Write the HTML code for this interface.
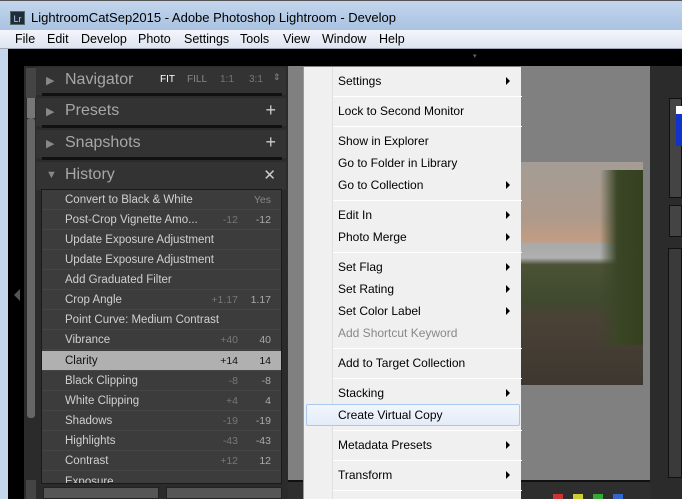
<!DOCTYPE html>
<html><head><style>
*{margin:0;padding:0;box-sizing:border-box}
body{width:682px;height:499px;overflow:hidden;position:relative;background:#000;font-family:"Liberation Sans",sans-serif}
.a{position:absolute}
.title{left:0;top:0;width:682px;height:30px;background:linear-gradient(#c3d5ec,#a9c3e2);border-top:1px solid #555}
.menu{left:0;top:30px;width:682px;height:19px;background:linear-gradient(#f4f6fb,#dde3f0);border-bottom:1px solid #a0a8b8;font-size:12.5px;color:#000}
.menu span{position:absolute;top:2px}
.hd{left:36px;width:250px;height:28px;background:#333;color:#a7a7a7;font-size:16px}
.hd .t{position:absolute;left:29px;top:4px}
.hd .tri{position:absolute;left:10px;top:7px;color:#888;font-size:11px}
.hd .p{position:absolute;right:10px;top:2px;font-size:18px;color:#ccc}
.ln{left:42px;width:240px;height:3px;background:#111}
.hist{left:41px;top:189px;width:241px;height:295px;background:#3c3c3c;border:1px solid #1a1a1a;overflow:hidden}
.row{position:absolute;left:0;width:239px;height:20px;font-size:11.5px;color:#d0d0d0;border-bottom:1px solid #454545}
.row .n{position:absolute;left:23px;top:4px}
.row .v1{position:absolute;right:43px;top:4px;color:#777;font-size:10.5px}
.row .v2{position:absolute;right:10px;top:4px;color:#aaa;font-size:10.5px}
.ctx{left:303px;top:67px;width:218px;height:432px;background:#f0f0f0;border-left:1px solid #999}
.gut{left:0;top:0;width:29px;height:432px;border-right:1px solid #e0e0e0;background:#f0f0f0}
.it{position:absolute;left:34px;font-size:12px;color:#000}
.ar{position:absolute;left:202px;width:0;height:0;border-top:4px solid transparent;border-bottom:4px solid transparent;border-left:4px solid #000}
.sep{position:absolute;left:29px;width:189px;height:1px;background:#d8d8d8;border-bottom:1px solid #fff}
</style></head><body>
<div class="a title">
 <div class="a" style="left:10px;top:10px;width:15px;height:14px;background:#1e2c3a;color:#b9d3ec;font-size:9px;line-height:14px;text-align:center;border:1px solid #566">Lr</div>
 <div class="a" style="left:31px;top:9px;font-size:13px;color:#000">LightroomCatSep2015 - Adobe Photoshop Lightroom - Develop</div>
</div>
<div class="a menu">
<span style="left:15px">File</span><span style="left:47px">Edit</span><span style="left:81px">Develop</span><span style="left:138px">Photo</span><span style="left:184px">Settings</span><span style="left:240px">Tools</span><span style="left:283px">View</span><span style="left:322px">Window</span><span style="left:379px">Help</span>
</div>
<div class="a" style="left:0;top:49px;width:8px;height:450px;background:#c4d6ec"></div>
<div class="a" style="left:14px;top:289px;width:0;height:0;border-top:6px solid transparent;border-bottom:6px solid transparent;border-right:6px solid #555"></div>
<div class="a" style="left:24px;top:66px;width:264px;height:433px;background:#2b2b2b"></div>
<div class="a" style="left:26px;top:68px;width:10px;height:30px;background:#444"></div>
<div class="a" style="left:27px;top:98px;width:8px;height:20px;background:#777"></div>
<div class="a" style="left:27px;top:118px;width:8px;height:300px;background:#666;border-radius:3px"></div>
<div class="a" style="left:26px;top:480px;width:10px;height:19px;background:#444"></div>
<div class="a hd" style="top:67px"><span class="tri">▶</span><span class="t">Navigator</span>
<span class="a" style="left:124px;top:7px;font-size:10px;color:#fff">FIT</span><span class="a" style="left:151px;top:7px;font-size:10px;color:#888">FILL</span><span class="a" style="left:184px;top:7px;font-size:10px;color:#777">1:1</span><span class="a" style="left:213px;top:7px;font-size:10px;color:#777">3:1</span><span class="a" style="left:237px;top:5px;font-size:9px;color:#888">⇕</span></div>
<div class="a ln" style="top:93px"></div>
<div class="a hd" style="top:98px"><span class="tri">▶</span><span class="t">Presets</span><span class="p">+</span></div>
<div class="a ln" style="top:125px"></div>
<div class="a hd" style="top:130px"><span class="tri">▶</span><span class="t">Snapshots</span><span class="p">+</span></div>
<div class="a ln" style="top:157px"></div>
<div class="a hd" style="top:162px"><span class="tri">▼</span><span class="t">History</span><span class="p" style="font-size:15px;top:4px">✕</span></div>
<div class="a hist">
<div class="row" style="top:0"><span class="n">Convert to Black &amp; White</span><span class="v2" style="color:#888">Yes</span></div>
<div class="row" style="top:20px"><span class="n">Post-Crop Vignette Amo...</span><span class="v1">-12</span><span class="v2">-12</span></div>
<div class="row" style="top:40px"><span class="n">Update Exposure Adjustment</span></div>
<div class="row" style="top:60px"><span class="n">Update Exposure Adjustment</span></div>
<div class="row" style="top:80px"><span class="n">Add Graduated Filter</span></div>
<div class="row" style="top:100px"><span class="n">Crop Angle</span><span class="v1">+1.17</span><span class="v2">1.17</span></div>
<div class="row" style="top:120px"><span class="n">Point Curve: Medium Contrast</span></div>
<div class="row" style="top:140px"><span class="n">Vibrance</span><span class="v1">+40</span><span class="v2">40</span></div>
<div class="row" style="top:161px;background:#b0b0b0;color:#111"><span class="n">Clarity</span><span class="v1" style="color:#111">+14</span><span class="v2" style="color:#111">14</span></div>
<div class="row" style="top:181px"><span class="n">Black Clipping</span><span class="v1">-8</span><span class="v2">-8</span></div>
<div class="row" style="top:201px"><span class="n">White Clipping</span><span class="v1">+4</span><span class="v2">4</span></div>
<div class="row" style="top:221px"><span class="n">Shadows</span><span class="v1">-19</span><span class="v2">-19</span></div>
<div class="row" style="top:241px"><span class="n">Highlights</span><span class="v1">-43</span><span class="v2">-43</span></div>
<div class="row" style="top:261px"><span class="n">Contrast</span><span class="v1">+12</span><span class="v2">12</span></div>
<div class="row" style="top:282px"><span class="n">Exposure</span></div>
</div>
<div class="a" style="left:43px;top:487px;width:116px;height:12px;background:#555;border:1px solid #222"></div>
<div class="a" style="left:166px;top:487px;width:116px;height:12px;background:#555;border:1px solid #222"></div>
<div class="a" style="left:288px;top:66px;width:362px;height:414px;background:#808080"></div>
<div class="a" style="left:288px;top:480px;width:362px;height:19px;background:#2e2e2e;border-top:2px solid #111"></div>
<div class="a" style="left:553px;top:494px;width:10px;height:5px;background:#c33"></div>
<div class="a" style="left:573px;top:494px;width:10px;height:5px;background:#cc3"></div>
<div class="a" style="left:593px;top:494px;width:10px;height:5px;background:#3a3"></div>
<div class="a" style="left:613px;top:494px;width:10px;height:5px;background:#36c"></div>
<div class="a" style="left:521px;top:162px;width:122px;height:223px;background:linear-gradient(180deg,#a49c95 0%,#ae9a8a 25%,#c49c84 36%,#a8a8a8 36%,#b0b0b0 43%,#4c5236 46%,#3f4a2e 62%,#4a4236 70%,#3d3730 100%)"></div>
<div class="a" style="left:600px;top:170px;width:43px;height:175px;background:linear-gradient(90deg,rgba(60,72,40,0),#3a4626 40%,#34401f)"></div>
<div class="a" style="left:650px;top:66px;width:32px;height:433px;background:#2b2b2b"></div>
<div class="a" style="left:669px;top:98px;width:13px;height:100px;background:#444;border:1px solid #111"></div>
<div class="a" style="left:676px;top:106px;width:6px;height:40px;background:linear-gradient(#fff 0 8px,#1133cc 8px)"></div>
<div class="a" style="left:669px;top:205px;width:13px;height:32px;background:#444;border:1px solid #111"></div>
<div class="a" style="left:668px;top:248px;width:14px;height:230px;background:#3a3a3a;border:1px solid #111"></div>
<div class="a" style="left:473px;top:52px;font-size:7px;color:#666">▾</div>
<div class="a ctx">
<div class="a gut"></div>
<div class="it" style="top:7px">Settings</div><div class="ar" style="top:10px"></div>
<div class="sep" style="top:29px"></div>
<div class="it" style="top:37px">Lock to Second Monitor</div>
<div class="sep" style="top:59px"></div>
<div class="it" style="top:67px">Show in Explorer</div>
<div class="it" style="top:89px">Go to Folder in Library</div>
<div class="it" style="top:111px">Go to Collection</div><div class="ar" style="top:114px"></div>
<div class="sep" style="top:133px"></div>
<div class="it" style="top:141px">Edit In</div><div class="ar" style="top:144px"></div>
<div class="it" style="top:163px">Photo Merge</div><div class="ar" style="top:166px"></div>
<div class="sep" style="top:185px"></div>
<div class="it" style="top:193px">Set Flag</div><div class="ar" style="top:196px"></div>
<div class="it" style="top:215px">Set Rating</div><div class="ar" style="top:218px"></div>
<div class="it" style="top:237px">Set Color Label</div><div class="ar" style="top:240px"></div>
<div class="it" style="top:259px;color:#888">Add Shortcut Keyword</div>
<div class="sep" style="top:281px"></div>
<div class="it" style="top:289px">Add to Target Collection</div>
<div class="sep" style="top:311px"></div>
<div class="it" style="top:319px">Stacking</div><div class="ar" style="top:322px"></div>
<div class="a" style="left:2px;top:337px;width:214px;height:22px;background:linear-gradient(#f2f6fc,#e4ecf8);border:1px solid #a8c8f0;border-radius:2px"></div>
<div class="it" style="top:341px">Create Virtual Copy</div>
<div class="sep" style="top:363px"></div>
<div class="it" style="top:371px">Metadata Presets</div><div class="ar" style="top:374px"></div>
<div class="sep" style="top:393px"></div>
<div class="it" style="top:401px">Transform</div><div class="ar" style="top:404px"></div>
<div class="sep" style="top:423px"></div>
</div>
</body></html>
